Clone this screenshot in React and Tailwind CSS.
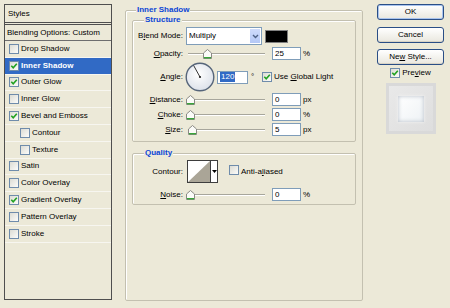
import React from "react";

const Check = ({ checked }) => (
  <span className="relative inline-block w-[10px] h-[10px] shrink-0 border border-[#6f8cab] bg-gradient-to-br from-[#dcdcd4] to-[#fcfcfa]">
    {checked && (
      <svg viewBox="0 0 8 8" className="absolute inset-0 w-full h-full">
        <path d="M1.3 3.8 L3.2 5.8 L6.8 1.8" stroke="#21a121" strokeWidth="1.6" fill="none" />
      </svg>
    )}
  </span>
);

const StyleRow = ({ label, checked, selected, indent, noCheck }) => (
  <div
    className={
      "flex items-center h-[16.8px] border-b border-[#f7f6f0] gap-[2px] " +
      (indent ? "pl-[15px] " : "pl-[4px] ") +
      (selected ? "bg-[#316ac5] text-white font-bold" : "")
    }
  >
    {!noCheck && <Check checked={checked} />}
    <span className="whitespace-nowrap">{label}</span>
  </div>
);

const Thumb = () => (
  <svg width="9" height="10" viewBox="0 0 9 10" className="block">
    <path d="M0.5 4 L4.5 0.5 L8.5 4 V9.5 H0.5 Z" fill="#fbfbf8" stroke="#8a8a85" strokeWidth="1" />
    <path d="M1 8.7 H8" stroke="#3aa53a" strokeWidth="1.4" />
  </svg>
);

const Slider = ({ pos }) => (
  <div className="relative w-[77px] h-full">
    <div className="absolute left-0 right-0 top-[6px] h-[2px] border-t border-[#a7a69c] border-b border-b-white" />
    <div className="absolute top-[2px]" style={{ left: pos }}>
      <Thumb />
    </div>
  </div>
);

const Input = ({ children, w }) => (
  <div className={"h-[13px] border border-[#7f9db9] bg-white flex items-center pl-[2px] " + (w || "w-[29px]")}>
    {children}
  </div>
);

const Label = ({ children }) => (
  <div className="w-[50px] text-right whitespace-nowrap">{children}</div>
);

const SliderRow = ({ label, value, unit, pos, mt }) => (
  <div className={"flex items-center h-[13px] " + mt}>
    <Label>{label}</Label>
    <div className="ml-[5px] h-full">
      <Slider pos={pos} />
    </div>
    <div className="ml-[7px]">
      <Input>{value}</Input>
    </div>
    <span className="ml-[2px]">{unit}</span>
  </div>
);

const Button = ({ children, isDefault }) => (
  <div
    className={
      "w-[67px] h-[16px] rounded-[3px] border border-[#2a4e86] bg-gradient-to-b from-white to-[#e9e7de] flex items-center justify-center " +
      (isDefault ? "shadow-[inset_0_0_0_1px_#a9c4ee]" : "shadow-[inset_0_-1px_0_#d8d3c6]")
    }
  >
    {children}
  </div>
);

export default function App() {
  return (
    <div className="w-[450px] h-[308px] bg-[#ece9d8] flex items-start text-[8px] leading-[10px] text-black font-['Liberation_Sans',Arial,sans-serif] overflow-hidden">
      {/* Left styles list */}
      <div className="ml-[4px] mt-[4px] w-[108px] h-[296px] border border-[#4f4f4f] flex flex-col">
        <div className="h-[20px] border-b-[3px] border-double border-[#4f4f4f] flex items-center pl-[3px]">Styles</div>
        <div className="h-[16px] border-b border-[#6e6e6e] flex items-center pl-[2px] whitespace-nowrap">Blending Options: Custom</div>
        <StyleRow label="Drop Shadow" />
        <StyleRow label="Inner Shadow" checked selected />
        <StyleRow label="Outer Glow" checked />
        <StyleRow label="Inner Glow" />
        <StyleRow label="Bevel and Emboss" checked />
        <StyleRow label="Contour" indent />
        <StyleRow label="Texture" indent />
        <StyleRow label="Satin" />
        <StyleRow label="Color Overlay" />
        <StyleRow label="Gradient Overlay" checked />
        <StyleRow label="Pattern Overlay" />
        <StyleRow label="Stroke" />
      </div>

      {/* Middle */}
      <fieldset className="ml-[13px] mt-[5px] w-[238px] h-[296px] border border-[#c3c0b0] rounded-[2px] shadow-[inset_1px_1px_0_#fff] p-0 m-0 min-w-0">
        <legend className="ml-[10px] px-[1px] bg-[#ece9d8] text-[#0b45d6] font-bold leading-[10px]">Inner Shadow</legend>

        <fieldset className="ml-[6px] w-[224px] border border-[#c3c0b0] rounded-[2px] shadow-[inset_1px_1px_0_#fff] p-0 m-0 pb-[5px] min-w-0">
          <legend className="ml-[11px] px-[1px] bg-[#ece9d8] text-[#0b45d6] font-bold leading-[10px]">Structure</legend>

          <div className="flex items-center h-[18px] mt-[2px]">
            <Label>
              B<span className="underline">l</span>end Mode:
            </Label>
            <div className="ml-[3px] w-[76px] h-[18px] border border-[#7f9db9] bg-white flex items-center">
              <span className="flex-1 pl-[2px]">Multiply</span>
              <span className="w-[12px] h-full bg-gradient-to-b from-[#cfdcfb] to-[#b4c8f6] border border-white flex items-center justify-center">
                <svg width="7" height="5" viewBox="0 0 7 5">
                  <path d="M1 1 L3.5 3.5 L6 1" stroke="#4d6185" strokeWidth="1.4" fill="none" />
                </svg>
              </span>
            </div>
            <div className="ml-[3px] w-[23px] h-[13px] bg-black border border-[#808080]" />
          </div>

          <SliderRow
            mt="mt-[2px]"
            label={<><span className="underline">O</span>pacity:</>}
            value="25"
            unit="%"
            pos="15px"
          />

          <div className="flex items-center h-[30px] mt-[2px]">
            <Label>
              <span className="underline">A</span>ngle:
            </Label>
            <svg width="30" height="30" viewBox="0 0 30 30" className="ml-[2px] block">
              <defs>
                <radialGradient id="dg" cx="45%" cy="40%" r="60%">
                  <stop offset="0" stopColor="#ffffff" />
                  <stop offset="1" stopColor="#dde2ea" />
                </radialGradient>
              </defs>
              <circle cx="15" cy="15" r="13.8" fill="url(#dg)" stroke="#56657a" strokeWidth="1.4" />
              <line x1="15" y1="15" x2="8.7" y2="3.6" stroke="#1e1e1e" strokeWidth="0.9" />
              <circle cx="15" cy="15" r="1.1" fill="#1e1e1e" />
            </svg>
            <div className="ml-[2px]">
              <Input w="w-[31px]">
                <span className="bg-[#316ac5] text-white px-[1px]">120</span>
              </Input>
            </div>
            <span className="ml-[3px] w-[11px]">°</span>
            <Check checked />
            <span className="ml-[2px] whitespace-nowrap">
              Use <span className="underline">G</span>lobal Light
            </span>
          </div>

          <SliderRow
            mt="mt-[1px]"
            label={<><span className="underline">D</span>istance:</>}
            value="0"
            unit="px"
            pos="-2px"
          />
          <SliderRow
            mt="mt-[2px]"
            label={<><span className="underline">C</span>hoke:</>}
            value="0"
            unit="%"
            pos="-2px"
          />
          <SliderRow
            mt="mt-[2px]"
            label={<><span className="underline">S</span>ize:</>}
            value="5"
            unit="px"
            pos="0px"
          />
        </fieldset>

        <fieldset className="ml-[6px] mt-[6px] w-[224px] border border-[#c3c0b0] rounded-[2px] shadow-[inset_1px_1px_0_#fff] p-0 m-0 pb-[3px] min-w-0">
          <legend className="ml-[11px] px-[1px] bg-[#ece9d8] text-[#0b45d6] font-bold leading-[10px]">Quality</legend>

          <div className="flex items-center h-[23px] mt-[2px]">
            <Label>Contour:</Label>
            <div className="ml-[4px] w-[31px] h-[23px] border border-[#3d3d3d] bg-white flex">
              <svg width="22" height="21" viewBox="0 0 22 21" className="block">
                <polygon points="0,21 22,0 22,21" fill="#aaa597" />
              </svg>
              <div className="flex-1 border-l border-[#3d3d3d] flex items-center justify-center">
                <svg width="5" height="3" viewBox="0 0 5 3">
                  <path d="M0 0 H5 L2.5 3 Z" fill="#000" />
                </svg>
              </div>
            </div>
            <div className="ml-[11px]">
              <Check />
            </div>
            <span className="ml-[2px] whitespace-nowrap">
              Anti-a<span className="underline">l</span>iased
            </span>
          </div>

          <SliderRow
            mt="mt-[5px]"
            label={<><span className="underline">N</span>oise:</>}
            value="0"
            unit="%"
            pos="-2px"
          />
        </fieldset>
      </fieldset>

      {/* Right */}
      <div className="ml-[14px] mt-[4px] w-[67px] flex flex-col items-center">
        <Button isDefault>OK</Button>
        <div className="mt-[7px]">
          <Button>Cancel</Button>
        </div>
        <div className="mt-[6px]">
          <Button>
            <span>
              Ne<span className="underline">w</span> Style...
            </span>
          </Button>
        </div>
        <div className="mt-[3px] h-[10px] flex items-center gap-[2px]">
          <Check checked />
          <span>
            Pre<span className="underline">v</span>iew
          </span>
        </div>
        <div className="mt-[5px] w-[50px] h-[51px] bg-[#d9d9d9] p-[3px]">
          <div className="w-full h-full bg-gradient-to-br from-[#e9e9e9] to-[#dedede] flex items-center justify-center">
            <div className="w-[26px] h-[26px] bg-gradient-to-br from-[#ffffff] to-[#eef2f5] shadow-[inset_0_0_4px_#b6bec8,0_0_3px_#f4f4f4]" />
          </div>
        </div>
      </div>
    </div>
  );
}
